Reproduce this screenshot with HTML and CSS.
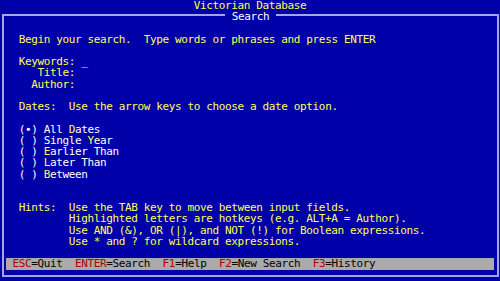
FILE: index.html
```html
<!DOCTYPE html>
<html lang="en">
<head>
    <meta charset="UTF-8">
    <meta name="viewport" content="width=device-width, initial-scale=1.0">
    <title>Victorian Database - Search</title>
    <link rel="stylesheet" href="styles.css">
</head>
<body>
    <div class="screen">
        <header class="app-title">Victorian Database</header>

        <div class="panel">
            <div class="panel-head"><span class="panel-legend"> Search </span></div>

            <div class="panel-body">
                <p class="intro">Begin your search.  Type words or phrases and press ENTER</p>

                <div class="fields">
                    <div class="field"><label class="field-label">Keywords:</label><span class="field-value"><span class="cursor">_</span></span></div>
                    <div class="field"><label class="field-label">Title:</label><span class="field-value"></span></div>
                    <div class="field"><label class="field-label">Author:</label><span class="field-value"></span></div>
                </div>

                <p class="dates">Dates:  Use the arrow keys to choose a date option.</p>

                <ul class="options">
                    <li class="option"><span class="radio">(∙)</span> All <span class="hotkey">D</span>ates</li>
                    <li class="option"><span class="radio">( )</span> Single <span class="hotkey">Y</span>ear</li>
                    <li class="option"><span class="radio">( )</span> <span class="hotkey">E</span>arlier Than</li>
                    <li class="option"><span class="radio">( )</span> <span class="hotkey">L</span>ater Than</li>
                    <li class="option"><span class="radio">( )</span> <span class="hotkey">B</span>etween</li>
                </ul>

                <div class="hints">
                    <span class="hints-label">Hints:</span>
                    <div class="hints-text">
                        <p>Use the TAB key to move between input fields.</p>
                        <p>Highlighted letters are hotkeys (e.g. ALT+A = Author).</p>
                        <p>Use AND (&amp;), OR (|), and NOT (!) for Boolean expressions.</p>
                        <p>Use * and ? for wildcard expressions.</p>
                    </div>
                </div>
            </div>

            <div class="status-bar"> <span class="key">ESC</span>=Quit  <span class="key">ENTER</span>=Search  <span class="key">F1</span>=Help  <span class="key">F2</span>=New Search  <span class="key">F3</span>=History</div>
        </div>
    </div>
</body>
</html>
```

FILE: styles.css
```css
body {
    margin: 0;
    background-color: #0000a8;
    font-family: "DejaVu Sans Mono", "Liberation Mono", monospace;
    font-size: 11px;
    letter-spacing: -0.37px;
    line-height: 11.24px;
    color: #ffff55;
}
p, ul {
    margin: 0;
    padding: 0;
}
.screen {
    width: 500px;
    height: 281px;
    overflow: hidden;
}
.app-title {
    height: 11.24px;
    text-align: center;
}
.panel {
    margin: 2.76px 1px 0 2px;
    border: 2px solid #a4a4ec;
    border-top: 0;
    padding-bottom: 5.23px;
}
.panel-head {
    display: flex;
    align-items: flex-start;
    height: 8.48px;
    margin: 0 -2px;
}
.panel-head::before, .panel-head::after {
    content: "";
    flex: 1;
    height: 2px;
    background: #a4a4ec;
}
.panel-legend {
    margin-top: -2.76px;
    color: #ffffff;
    white-space: pre;
}
.panel-body {
    padding-left: 14.75px;
}
.intro, .dates, .option, .hints-text p, .status-bar {
    white-space: pre;
}
.intro {
    margin-top: 11.24px;
}
.fields {
    margin-top: 11.24px;
}
.field {
    display: flex;
}
.field-label {
    width: 56.25px;
    text-align: right;
}
.field-value {
    margin-left: 6.25px;
}
.dates {
    margin-top: 11.24px;
}
.options {
    margin-top: 11.24px;
    list-style: none;
}
.option {
    color: #ffffff;
}
.hotkey {
    color: #ffff55;
}
.hints {
    display: flex;
    margin-top: 22.48px;
}
.hints-label {
    width: 50px;
}
.status-bar {
    margin: 11.24px 3.25px 0 2.25px;
    height: 11.24px;
    background: #aaaaaa;
    color: #000000;
}
.status-bar .key {
    color: #b00000;
}
```
